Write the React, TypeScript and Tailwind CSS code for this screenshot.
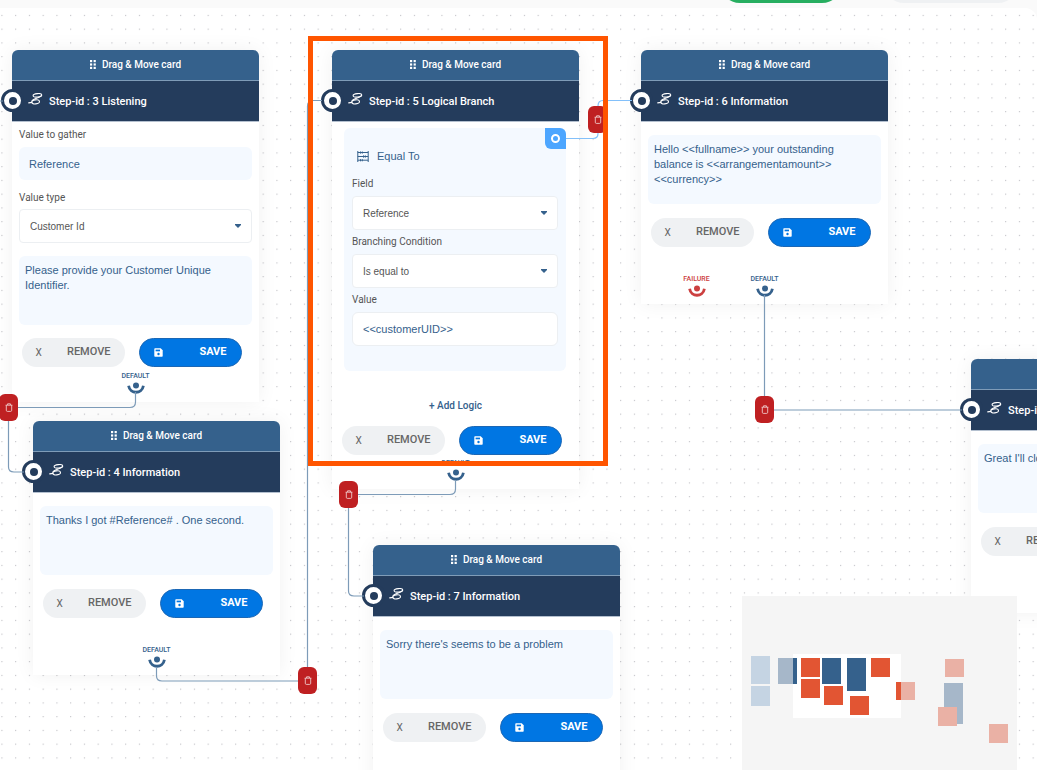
import type { ReactNode } from 'react';

type Handle = 'failure' | 'default';

const GripIcon = () => (
    <svg width="6" height="9" viewBox="0 0 6 9" fill="currentColor" aria-hidden="true">
        {[0, 3.4, 6.8].map((y) => (
            <g key={y}>
                <rect x="0" y={y} width="2.2" height="2.2" />
                <rect x="3.6" y={y} width="2.2" height="2.2" />
            </g>
        ))}
    </svg>
);

const StepIcon = () => (
    <svg className="mb-1.5" width="15" height="12" viewBox="0 0 15 12" fill="none" stroke="currentColor" strokeWidth="1.1" strokeLinecap="round" aria-hidden="true">
        <ellipse cx="9.4" cy="2.3" rx="4.3" ry="1.7" transform="rotate(-6 9.4 2.3)" />
        <ellipse cx="7.6" cy="8.9" rx="3.9" ry="2" transform="rotate(-8 7.6 8.9)" />
        <path d="M13.6 2.4C13 4.8 7 5 4.2 7.4M.7 9.9 4 9.4" />
    </svg>
);

const TrashIcon = () => (
    <svg width="8" height="9" viewBox="0 0 8 9" fill="none" stroke="currentColor" strokeWidth="0.8" opacity="0.85" aria-hidden="true">
        <path d="M.6 2.2H7.4M2.6 2V.8H5.4V2M1.3 2.2V7.3C1.3 8 1.7 8.4 2.3 8.4H5.7C6.3 8.4 6.7 8 6.7 7.3V2.2" />
    </svg>
);

const SaveIcon = () => (
    <svg width="9" height="9" viewBox="0 0 9 9" aria-hidden="true">
        <path d="M1 .3H6.7L8.7 2.3V8Q8.7 8.7 8 8.7H1Q.3 8.7.3 8V1Q.3.3 1 .3Z" fill="white" />
        <rect x="1.6" y="1.6" width="4.4" height="1.7" fill="#0076e3" />
        <circle cx="4.5" cy="6" r="1.2" fill="#0076e3" />
    </svg>
);

const LogicIcon = () => (
    <svg width="12" height="11" viewBox="0 0 12 11" fill="none" stroke="currentColor" strokeWidth="1" aria-hidden="true">
        <path d="M.8 0V11M11.2 0V11M.8 1.5H11.2M.8 5.5H11.2M.8 9.2H11.2" />
        <path d="M3.5.5V2.6M5.3.5V2.6M6.5 4.4V6.6M8.3 4.4V6.6M3.5 8.2V10.3M5.3 8.2V10.3" />
    </svg>
);

const HandleIcon = () => (
    <svg width="18" height="12" viewBox="0 0 18 12" aria-hidden="true">
        <circle cx="9" cy="3.5" r="3" fill="currentColor" />
        <path d="M1.6 3.8C3 12.4 15 12.4 16.4 3.8" fill="none" stroke="currentColor" strokeWidth="2.8" />
    </svg>
);

function Label({ text, htmlFor }: { text: string; htmlFor: string }) {
    return (
        <label htmlFor={htmlFor} className="block text-[10px] leading-4 text-[#555555]">
            {text}
        </label>
    );
}

function SelectBox({ id, value }: { id: string; value: string }) {
    return (
        <div className="relative">
            <select
                id={id}
                defaultValue={value}
                className="block h-[34px] w-full appearance-none rounded border border-[#eceff2] bg-white px-2.5 font-['Liberation_Sans',sans-serif] text-[10px] text-[#555555]"
            >
                <option>{value}</option>
            </select>
            <svg className="pointer-events-none absolute top-[15px] right-[11px]" width="6" height="4" viewBox="0 0 6 4" fill="#35618c" aria-hidden="true">
                <path d="M0 0H6V1L3 4 0 1Z" />
            </svg>
        </div>
    );
}

function Message({ text }: { text: string }) {
    return (
        <textarea
            aria-label="Message"
            defaultValue={text}
            className="block h-[69px] w-full resize-none overflow-hidden rounded-md bg-[#f4f9ff] px-1.5 py-[7px] font-['Liberation_Sans',sans-serif] text-[11px] leading-[15px] text-[#35618c]"
        />
    );
}

function Actions() {
    return (
        <div className="flex justify-center gap-3.5 pr-2 text-[11px]">
            <button className="flex h-[29px] w-[103px] items-center justify-between rounded-full bg-[#eff1f3] px-3.5 font-medium text-[#666666]">
                <span className="text-[10px] font-normal">X</span>
                REMOVE
            </button>
            <button className="flex h-[29px] w-[103px] items-center justify-between rounded-full border border-[#1b67b5] bg-[#0076e3] px-3.5 font-bold text-white">
                <SaveIcon />
                SAVE
            </button>
        </div>
    );
}

function Handles({ items }: { items: Handle[] }) {
    return (
        <div className="flex justify-center text-[7px] leading-3 font-medium">
            {items.map((item) => (
                <div key={item} className={`flex w-[68px] flex-col items-center ${item === 'failure' ? 'text-[#cc4040]' : 'text-[#35618c]'}`}>
                    {item.toUpperCase()}
                    <HandleIcon />
                </div>
            ))}
            {items.length > 1 && <div className="w-[68px]" />}
        </div>
    );
}

function Card({ title, place, children }: { title: string; place: string; children: ReactNode }) {
    return (
        <section className={`absolute w-[247px] rounded-t-md bg-white shadow-[0_0_20px_rgba(0,0,0,0.06)] ${place}`}>
            <div className="flex h-[31px] items-center justify-center gap-1.5 rounded-t-md border-b border-[#7f9cb8] bg-[#35618c] pb-0.5 text-[10px] font-medium text-white">
                <GripIcon />
                Drag &amp; Move card
            </div>
            <div className="relative flex h-[41px] items-center gap-1.5 border-b border-[#b4c0cf] bg-[#243c5c] pt-0.5 pl-4 text-[11px] font-medium text-white">
                <span className="absolute top-2 -left-[11px] flex size-[23px] items-center justify-center rounded-full border-3 border-[#243c5c] bg-white">
                    <span className="size-2 rounded-full bg-[#243c5c]" />
                </span>
                <StepIcon />
                <h2>{title}</h2>
            </div>
            {children}
        </section>
    );
}

function InfoCard({ title, place, text, handles = ['default'] }: { title: string; place: string; text: string; handles?: Handle[] }) {
    return (
        <Card title={title} place={place}>
            <div className="px-[7px] pt-[13px] pb-[7px]">
                <Message text={text} />
                <div className="mt-3.5 mb-[26px]">
                    <Actions />
                </div>
                <Handles items={handles} />
            </div>
        </Card>
    );
}

function DeleteEdge({ place }: { place: string }) {
    return (
        <button aria-label="Delete connection" className={`absolute flex h-[27px] w-[19px] items-center justify-center rounded-md bg-[#bf2022] text-white ${place}`}>
            <TrashIcon />
        </button>
    );
}

function Edges() {
    return (
        <svg className="pointer-events-none absolute inset-0 size-full" fill="none" stroke="#7d9bb8" strokeWidth="1.2" aria-hidden="true">
            <path d="M0 93H3" />
            <path d="M135.5 384V394Q135.5 399.5 130 399.5H8.5V459Q8.5 464 14 464H24" />
            <path d="M156.5 659V668Q156.5 673 162 673H307.5V98Q307.5 92.5 313 92.5H322" />
            <path d="M455.5 472V481Q455.5 486.5 450 486.5H348.5V583Q348.5 588 354 588H364" />
            <path d="M764.5 287V402H962" />
            <path d="M566 130.5H593Q598 130.5 598 125.5V98Q598 92.5 603 92.5H632" stroke="#83c0fa" />
        </svg>
    );
}

const miniNodes = [
    { x: 9, y: 60, w: 19, h: 28, fill: '#c5d4e3' },
    { x: 9, y: 90, w: 19, h: 20, fill: '#c5d4e3' },
    { x: 36, y: 62, w: 15, h: 26, fill: '#a6b7c9' },
    { x: 51, y: 62, w: 4, h: 26, fill: '#35618c' },
    { x: 59, y: 62, w: 19, h: 19, fill: '#e25533' },
    { x: 59, y: 83, w: 19, h: 19, fill: '#e25533' },
    { x: 80, y: 62, w: 19, h: 26, fill: '#35618c' },
    { x: 82, y: 90, w: 19, h: 19, fill: '#e25533' },
    { x: 105, y: 62, w: 19, h: 33, fill: '#35618c' },
    { x: 108, y: 100, w: 19, h: 19, fill: '#e25533' },
    { x: 129, y: 62, w: 19, h: 19, fill: '#e25533' },
    { x: 154, y: 86, w: 5, h: 18, fill: '#e25533' },
    { x: 159, y: 86, w: 14, h: 18, fill: '#eab1a5' },
    { x: 203, y: 63, w: 19, h: 18, fill: '#eab1a5' },
    { x: 202, y: 87, w: 19, h: 41, fill: '#a6b7c9' },
    { x: 196, y: 111, w: 19, h: 19, fill: '#eab1a5' },
    { x: 247, y: 128, w: 19, h: 19, fill: '#eab1a5' },
];

function MiniMap() {
    return (
        <svg className="absolute right-5 bottom-0 bg-[#f5f5f5]" width="275" height="174" viewBox="0 0 275 174" aria-hidden="true">
            <rect x="51" y="58" width="108" height="64" fill="white" />
            {miniNodes.map((n) => (
                <rect key={`${n.x}-${n.y}`} x={n.x} y={n.y} width={n.w} height={n.h} fill={n.fill} />
            ))}
        </svg>
    );
}

export default function App() {
    return (
        <div className="flex h-screen flex-col bg-[#fafafa] font-['Roboto',sans-serif]">
            <header className="flex h-2 items-end justify-end gap-[42px] overflow-hidden pr-[19px] pb-[5px]">
                <button aria-label="Publish" className="h-10 w-[122px] shrink-0 rounded-full bg-[#27ae60]" />
                <button aria-label="Close" className="h-10 w-[134px] shrink-0 rounded-full bg-[#eff1f3]" />
            </header>

            <main className="relative flex-1 overflow-hidden rounded-tr-xl bg-white">
                <svg className="absolute inset-0 size-full" aria-hidden="true">
                    <defs>
                        <pattern id="dots" x="2" y="10" width="20" height="20" patternUnits="userSpaceOnUse" patternTransform="scale(0.6875)">
                            <rect x="0" y="0" width="1.6" height="1.6" fill="#bdbdc2" />
                        </pattern>
                    </defs>
                    <rect width="100%" height="100%" fill="url(#dots)" />
                </svg>

                <Card title="Step-id : 3 Listening" place="left-[12px] top-[42px]">
                    <div className="px-[7px] pt-[5px] pb-2">
                        <Label htmlFor="gather" text="Value to gather" />
                        <input
                            id="gather"
                            defaultValue="Reference"
                            className="mt-1 mb-2.5 block h-[33px] w-full rounded-md bg-[#f4f9ff] px-2.5 font-['Liberation_Sans',sans-serif] text-[11px] text-[#35618c]"
                        />
                        <Label htmlFor="value-type" text="Value type" />
                        <div className="mt-[3px] mb-[13px]">
                            <SelectBox id="value-type" value="Customer Id" />
                        </div>
                        <Message text="Please provide your Customer Unique Identifier." />
                        <div className="mt-[13px] mb-[3px]">
                            <Actions />
                        </div>
                        <Handles items={['default']} />
                    </div>
                </Card>

                <Card title="Step-id : 5 Logical Branch" place="left-[332px] top-[42px]">
                    <div className="px-[7px] pt-[6px] pb-2">
                        <div className="relative ml-[5px] mr-1.5 rounded-md bg-[#f4f9ff] px-2 pt-5 pb-[25px] text-[#35618c]">
                            <button aria-label="Connect logic" className="absolute top-0 right-0 flex size-[21px] items-center justify-center rounded-tr-md rounded-bl-md bg-[#4da6ff]">
                                <span className="size-[9px] rounded-full border-2 border-white" />
                            </button>
                            <h3 className="mb-3 flex items-center gap-2 pl-[5px] font-['Liberation_Sans',sans-serif] text-[11px] leading-4">
                                <LogicIcon />
                                Equal To
                            </h3>
                            <div className="flex flex-col gap-1">
                                <div>
                                    <Label htmlFor="field" text="Field" />
                                    <div className="mt-1">
                                        <SelectBox id="field" value="Reference" />
                                    </div>
                                </div>
                                <div>
                                    <Label htmlFor="condition" text="Branching Condition" />
                                    <div className="mt-1">
                                        <SelectBox id="condition" value="Is equal to" />
                                    </div>
                                </div>
                                <div>
                                    <Label htmlFor="value" text="Value" />
                                    <input
                                        id="value"
                                        defaultValue="<<customerUID>>"
                                        className="mt-1 block h-[34px] w-full rounded-md border border-[#eceff2] bg-white px-2.5 font-['Liberation_Sans',sans-serif] text-[11px] text-[#35618c]"
                                    />
                                </div>
                            </div>
                        </div>
                        <button className="mx-auto mt-[27px] mb-3 block text-[10px] leading-4 font-medium text-[#35618c]">+ Add Logic</button>
                        <Actions />
                        <div className="mt-0.5">
                            <Handles items={['default']} />
                        </div>
                    </div>
                </Card>

                <InfoCard title="Step-id : 4 Information" place="left-[33px] top-[413px]" text="Thanks I got #Reference# . One second." />
                <InfoCard
                    title="Step-id : 6 Information"
                    place="left-[641px] top-[42px]"
                    text="Hello <<fullname>> your outstanding balance is <<arrangementamount>> <<currency>>"
                    handles={['failure', 'default']}
                />
                <InfoCard title="Step-id : 7 Information" place="left-[373px] top-[537px]" text="Sorry there's seems to be a problem" />
                <InfoCard title="Step-id : 8 Information" place="left-[971px] top-[351px]" text="Great I'll close this for you now." />

                <Edges />
                <DeleteEdge place="left-[-1px] top-[386px]" />
                <DeleteEdge place="left-[298px] top-[659px]" />
                <DeleteEdge place="left-[339px] top-[473px]" />
                <DeleteEdge place="left-[588px] top-[98px]" />
                <DeleteEdge place="left-[755px] top-[388px]" />

                <MiniMap />

                {/* Highlight frame around the logic card */}
                <div className="pointer-events-none absolute top-[28px] left-[308px] h-[430px] w-[300px] border-5 border-[#ff5500]" />
            </main>
        </div>
    );
}
